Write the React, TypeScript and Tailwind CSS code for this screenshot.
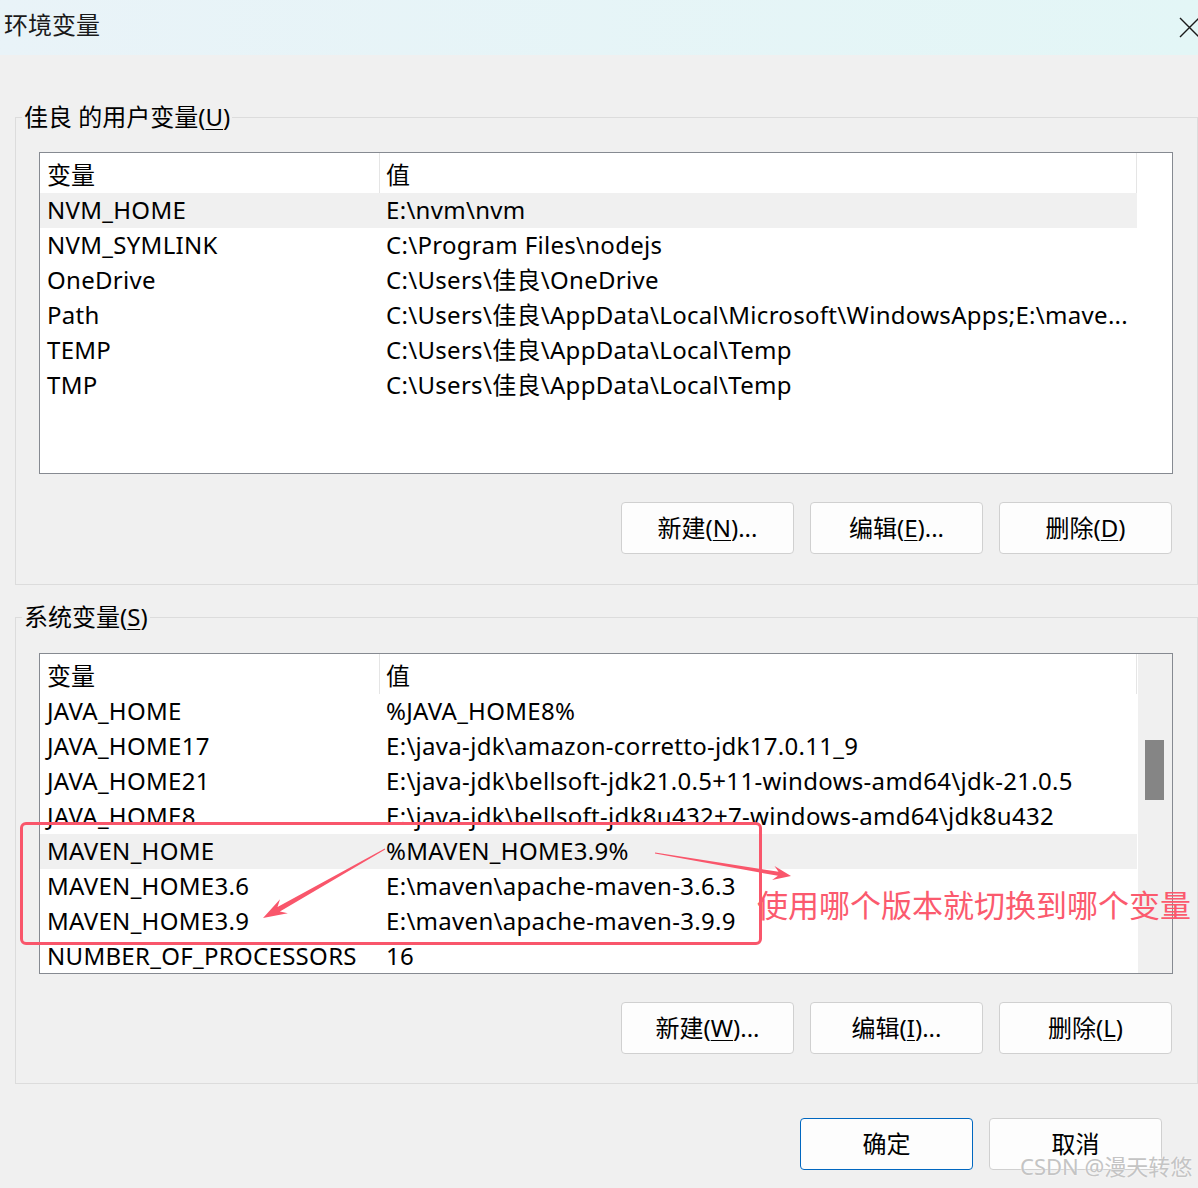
import React from 'react';

type Row = { name: string; value: string; selected?: boolean };

const userRows: Row[] = [
  { name: 'NVM_HOME', value: 'E:\\nvm\\nvm', selected: true },
  { name: 'NVM_SYMLINK', value: 'C:\\Program Files\\nodejs' },
  { name: 'OneDrive', value: 'C:\\Users\\佳良\\OneDrive' },
  { name: 'Path', value: 'C:\\Users\\佳良\\AppData\\Local\\Microsoft\\WindowsApps;E:\\mave...' },
  { name: 'TEMP', value: 'C:\\Users\\佳良\\AppData\\Local\\Temp' },
  { name: 'TMP', value: 'C:\\Users\\佳良\\AppData\\Local\\Temp' },
];

const systemRows: Row[] = [
  { name: 'JAVA_HOME', value: '%JAVA_HOME8%' },
  { name: 'JAVA_HOME17', value: 'E:\\java-jdk\\amazon-corretto-jdk17.0.11_9' },
  { name: 'JAVA_HOME21', value: 'E:\\java-jdk\\bellsoft-jdk21.0.5+11-windows-amd64\\jdk-21.0.5' },
  { name: 'JAVA_HOME8', value: 'E:\\java-jdk\\bellsoft-jdk8u432+7-windows-amd64\\jdk8u432' },
  { name: 'MAVEN_HOME', value: '%MAVEN_HOME3.9%', selected: true },
  { name: 'MAVEN_HOME3.6', value: 'E:\\maven\\apache-maven-3.6.3' },
  { name: 'MAVEN_HOME3.9', value: 'E:\\maven\\apache-maven-3.9.9' },
  { name: 'NUMBER_OF_PROCESSORS', value: '16' },
];

const VarList = ({ rows, height, scroll }: { rows: Row[]; height: string; scroll?: boolean }) => (
  <div className={`ml-[23px] w-[1134px] ${height} border border-[#868a91] bg-white flex overflow-hidden`}>
    <div className="w-[1097px] flex flex-col">
      <div className="flex h-[40px] shrink-0 items-center">
        <div className="w-[340px] h-full pl-[7px] pt-[3px] flex items-center border-r border-[#e5e5e5]">变量</div>
        <div className="flex-1 h-full pl-[6px] pt-[3px] flex items-center border-r border-[#e5e5e5]">值</div>
      </div>
      {rows.map((r) => (
        <div
          key={r.name}
          className={`flex h-[35px] shrink-0 leading-[33px] tracking-[0.3px] whitespace-nowrap ${
            r.selected ? 'bg-[#f0f0f0]' : ''
          }`}
        >
          <div className="w-[340px] pl-[7px]">{r.name}</div>
          <div className="flex-1 pl-[6px]">{r.value}</div>
        </div>
      ))}
    </div>
    {scroll ? (
      <div className="w-[35px] border-l border-white bg-[#f0f0f0]">
        <div className="ml-[7px] mt-[86px] w-[19px] h-[60px] bg-[#858585]" />
      </div>
    ) : (
      <div className="w-[35px]" />
    )}
  </div>
);

const Btn = ({ label, mn, tail, primary }: { label: string; mn?: string; tail?: string; primary?: boolean }) => (
  <button
    className={`w-[173px] h-[52px] rounded-[4px] border bg-[#fdfdfd] text-[24px] ${
      primary ? 'border-[#0067c0]' : 'border-[#d0d0d0]'
    }`}
  >
    {label}
    {mn && (
      <>
        (<span className="underline underline-offset-[3px] decoration-1">{mn}</span>){tail}
      </>
    )}
  </button>
);

export default function App() {
  return (
    <div
      className="relative w-[1198px] h-[1188px] overflow-hidden bg-[#f0f0f0] text-[24px] text-black"
      style={{ fontFamily: '"Noto Sans", "Noto Sans CJK SC", sans-serif' }}
    >
      <header className="h-[55px] flex items-center justify-between pl-[4px] pb-[5px] bg-gradient-to-r from-[#e9f3f8] to-[#e3f6f6]">
        <span className="text-[#1a1a1a]">环境变量</span>
        <svg width="21" height="21" viewBox="0 0 21 21" className="mr-[-2px] mt-[5px]">
          <path d="M1 1 L20 20 M20 1 L1 20" stroke="#1a1a1a" strokeWidth="1.4" fill="none" />
        </svg>
      </header>

      <div className="pl-[15px]">
        <fieldset className="mt-[48px] border border-[#dcdcdc] p-0 pb-[30px] m-0 min-w-0">
          <legend className="ml-[6px] px-[2px] leading-[28px]">
            佳良 的用户变量(<span className="underline underline-offset-[3px] decoration-1">U</span>)
          </legend>
          <div className="mt-[21px]">
            <VarList rows={userRows} height="h-[322px]" />
          </div>
          <div className="mt-[28px] flex justify-end gap-[16px] pr-[25px]">
            <Btn label="新建" mn="N" tail="..." />
            <Btn label="编辑" mn="E" tail="..." />
            <Btn label="删除" mn="D" />
          </div>
        </fieldset>

        <fieldset className="mt-[18px] border border-[#dcdcdc] p-0 pb-[29px] m-0 min-w-0">
          <legend className="ml-[6px] px-[2px] leading-[28px]">
            系统变量(<span className="underline underline-offset-[3px] decoration-1">S</span>)
          </legend>
          <div className="mt-[22px]">
            <VarList rows={systemRows} height="h-[321px]" scroll />
          </div>
          <div className="mt-[28px] flex justify-end gap-[16px] pr-[25px]">
            <Btn label="新建" mn="W" tail="..." />
            <Btn label="编辑" mn="I" tail="..." />
            <Btn label="删除" mn="L" />
          </div>
        </fieldset>
      </div>

      <div className="mt-[34px] flex justify-end gap-[16px] pr-[36px]">
        <Btn label="确定" primary />
        <Btn label="取消" />
      </div>

      {/* annotation overlay */}
      <div className="absolute left-[20px] top-[822px] w-[742px] h-[123px] border-[3px] border-[#f9566b] rounded-[6px]" />
      <svg className="absolute left-0 top-0 pointer-events-none" width="1198" height="1188">
        <polygon
          fill="#f9566b"
          points="384.8,848.6 277.5,907 280,899.2 263,918 287.8,913.2 279.9,911.4 385.2,849.4"
        />
        <polygon
          fill="#f9566b"
          points="655.1,852.5 778.5,871.8 774.5,866.1 791,876 772.1,879.9 777.9,875.8 654.9,853.5"
        />
      </svg>
      <div className="absolute left-[757px] top-[888px] text-[31px] leading-[34px] text-[#fb5a6e] whitespace-nowrap">
        使用哪个版本就切换到哪个变量
      </div>
      <div
        className="absolute left-[1020px] top-[1151px] text-[22px] leading-[30px] text-[#c4c4c4] whitespace-nowrap"
        style={{ textShadow: '0 0 2px #ffffff' }}
      >
        CSDN @漫天转悠
      </div>
    </div>
  );
}
